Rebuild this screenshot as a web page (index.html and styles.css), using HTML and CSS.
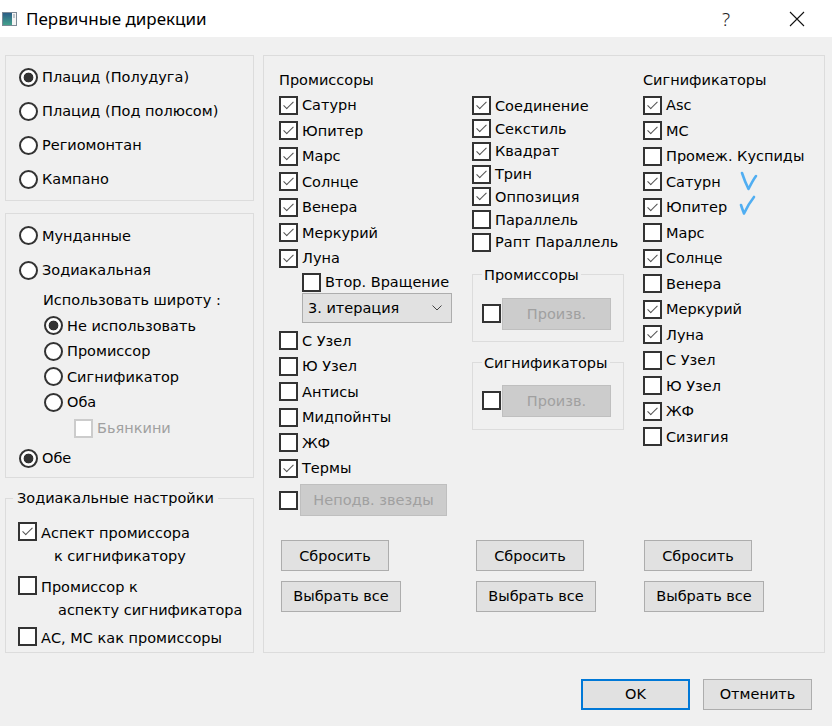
FILE: index.html
```html
<!DOCTYPE html>
<html lang="ru">
<head>
<meta charset="utf-8">
<title>Первичные дирекции</title>
<link rel="stylesheet" href="styles.css">
</head>
<body>
<header class="titlebar">
  <svg class="app-icon" viewBox="0 0 15 14" aria-hidden="true">
    <defs>
      <linearGradient id="ig" x1="0" y1="0" x2="0" y2="1">
        <stop offset="0" stop-color="#2b5d86"/>
        <stop offset="1" stop-color="#43a18c"/>
      </linearGradient>
    </defs>
    <rect x="0.5" y="0.5" width="14" height="13" fill="#f4f4f4" stroke="#7d8a96"/>
    <rect x="1" y="1" width="9" height="12" fill="url(#ig)"/>
    <rect x="11.5" y="2" width="1" height="4" fill="#8a96a0"/>
  </svg>
  <span class="title">Первичные дирекции</span>
  <span class="help">?</span>
  <svg class="close" viewBox="0 0 16 16" aria-hidden="true">
    <path d="M1 1 L15 15 M15 1 L1 15" stroke="#111" stroke-width="1.1" fill="none"/>
  </svg>
</header>

<main class="content">
  <div class="left">
    <section class="box box-method">
      <div class="opt h34"><span class="radio on"></span>Плацид (Полудуга)</div>
      <div class="opt h34"><span class="radio"></span>Плацид (Под полюсом)</div>
      <div class="opt h34"><span class="radio"></span>Региомонтан</div>
      <div class="opt h34"><span class="radio"></span>Кампано</div>
    </section>

    <section class="box box-type">
      <div class="opt h35"><span class="radio"></span>Мунданные</div>
      <div class="opt h34"><span class="radio"></span>Зодиакальная</div>
      <div class="opt h26 ind-label">Использовать широту :</div>
      <div class="opt h255 ind-radio"><span class="radio on"></span>Не использовать</div>
      <div class="opt h255 ind-radio"><span class="radio"></span>Промиссор</div>
      <div class="opt h255 ind-radio"><span class="radio"></span>Сигнификатор</div>
      <div class="opt h255 ind-radio"><span class="radio"></span>Оба</div>
      <div class="opt h26 ind-cb dim"><span class="cb dis"></span>Бьянкини</div>
      <div class="opt h34"><span class="radio on"></span>Обе</div>
    </section>

    <fieldset class="group group-zod">
      <legend>Зодиакальные настройки</legend>
      <div class="multi"><span class="cb on"></span><div class="lines"><div>Аспект промиссора</div><div class="l2a">к сигнификатору</div></div></div>
      <div class="multi m2"><span class="cb"></span><div class="lines"><div>Промиссор к</div><div class="l2b">аспекту сигнификатора</div></div></div>
      <div class="multi m3"><span class="cb"></span><div class="lines"><div>АС, МС как промиссоры</div></div></div>
    </fieldset>
  </div>

  <section class="panel">
    <div class="cols">
      <div class="col col1">
        <div class="head">Промиссоры</div>
        <div class="row"><span class="cb on"></span>Сатурн</div>
        <div class="row"><span class="cb on"></span>Юпитер</div>
        <div class="row"><span class="cb on"></span>Марс</div>
        <div class="row"><span class="cb on"></span>Солнце</div>
        <div class="row"><span class="cb on"></span>Венера</div>
        <div class="row"><span class="cb on"></span>Меркурий</div>
        <div class="row"><span class="cb on"></span>Луна</div>
        <div class="sub"><span class="cb"></span>Втор. Вращение</div>
        <div class="combo"><span>3. итерация</span>
          <svg class="chev" viewBox="0 0 10 6" aria-hidden="true"><path d="M0.5 0.5 L5 5 L9.5 0.5" fill="none" stroke="#444" stroke-width="1"/></svg>
        </div>
        <div class="row"><span class="cb"></span>С Узел</div>
        <div class="row"><span class="cb"></span>Ю Узел</div>
        <div class="row"><span class="cb"></span>Антисы</div>
        <div class="row"><span class="cb"></span>Мидпойнты</div>
        <div class="row"><span class="cb"></span>ЖФ</div>
        <div class="row"><span class="cb on"></span>Термы</div>
        <div class="fixed"><span class="cb"></span><button class="btn disabled wide">Неподв. звезды</button></div>
      </div>

      <div class="col col2">
        <div class="row2"><span class="cb on"></span>Соединение</div>
        <div class="row2"><span class="cb on"></span>Секстиль</div>
        <div class="row2"><span class="cb on"></span>Квадрат</div>
        <div class="row2"><span class="cb on"></span>Трин</div>
        <div class="row2"><span class="cb on"></span>Оппозиция</div>
        <div class="row2"><span class="cb"></span>Параллель</div>
        <div class="row2"><span class="cb"></span>Рапт Параллель</div>
        <fieldset class="group small g1">
          <legend>Промиссоры</legend>
          <div class="arb"><span class="cb"></span><button class="btn disabled arb-btn">Произв.</button></div>
        </fieldset>
        <fieldset class="group small g2">
          <legend>Сигнификаторы</legend>
          <div class="arb"><span class="cb"></span><button class="btn disabled arb-btn">Произв.</button></div>
        </fieldset>
      </div>

      <div class="col col3">
        <div class="head">Сигнификаторы</div>
        <div class="row"><span class="cb on"></span>Asc</div>
        <div class="row"><span class="cb on"></span>MC</div>
        <div class="row"><span class="cb"></span>Промеж. Куспиды</div>
        <div class="row"><span class="cb on"></span>Сатурн</div>
        <div class="row"><span class="cb on"></span>Юпитер</div>
        <div class="row"><span class="cb"></span>Марс</div>
        <div class="row"><span class="cb on"></span>Солнце</div>
        <div class="row"><span class="cb"></span>Венера</div>
        <div class="row"><span class="cb on"></span>Меркурий</div>
        <div class="row"><span class="cb on"></span>Луна</div>
        <div class="row"><span class="cb"></span>С Узел</div>
        <div class="row"><span class="cb"></span>Ю Узел</div>
        <div class="row"><span class="cb on"></span>ЖФ</div>
        <div class="row"><span class="cb"></span>Сизигия</div>
      </div>
    </div>

    <div class="actions">
      <div class="act"><button class="btn reset">Сбросить</button><button class="btn all">Выбрать все</button></div>
      <div class="act"><button class="btn reset">Сбросить</button><button class="btn all">Выбрать все</button></div>
      <div class="act"><button class="btn reset">Сбросить</button><button class="btn all">Выбрать все</button></div>
    </div>

    <svg class="marks" viewBox="733 165 30 55" aria-hidden="true">
      <path d="M742 173 C744 179 746 184 748.5 189 C751 184 753 180 756 176" fill="none" stroke="#3ea6f2" stroke-width="2.6" stroke-linecap="round" stroke-linejoin="round" opacity="0.9"/>
      <path d="M741 205 C742 208 743 211 744 213.5 C747 207 750 202 754 197" fill="none" stroke="#3ea6f2" stroke-width="2.6" stroke-linecap="round" stroke-linejoin="round" opacity="0.9"/>
    </svg>
  </section>
</main>

<footer class="footer">
  <button class="btn ok">OK</button>
  <button class="btn">Отменить</button>
</footer>
</body>
</html>
```

FILE: styles.css
```css
* { box-sizing: border-box; }

html, body { margin: 0; padding: 0; }

body {
  width: 832px;
  height: 726px;
  overflow: hidden;
  background: #f0f0f0;
  color: #000;
  font-family: "DejaVu Sans", "Liberation Sans", sans-serif;
  font-size: 14.5px;
}

/* ---------- title bar ---------- */
.titlebar {
  height: 37px;
  background: #fff;
  display: flex;
  align-items: center;
  padding-left: 2px;
}
.app-icon { width: 15px; height: 14px; margin-right: 9px; flex: none; }
.title {
  flex: 1;
  font-family: "Noto Sans", "Open Sans", sans-serif;
  font-size: 17px;
  color: #000;
}
.help {
  width: 10px;
  margin-right: 58px;
  text-align: center;
  font-family: "Noto Sans", sans-serif;
  font-weight: 300;
  font-size: 19px;
  color: #222;
}
.close { width: 16px; height: 16px; margin-right: 27px; flex: none; }

/* ---------- main area ---------- */
.content {
  display: flex;
  gap: 9px;
  padding: 18px 7px 0 5px;
}
.left {
  width: 249px;
  flex: none;
  display: flex;
  flex-direction: column;
}
.box { border: 1px solid #dcdcdc; }
.box-method { padding: 4px 0 4px 13px; }
.box-type { margin-top: 12px; padding: 4px 0 2px 13px; }

.opt { display: flex; align-items: center; white-space: nowrap; }
.h34 { height: 34px; }
.h35 { height: 35px; }
.h26 { height: 26px; }
.h255 { height: 25.5px; }
.ind-label { padding-left: 24px; }
.ind-radio { padding-left: 25px; }
.ind-cb { padding-left: 55px; }
.dim { color: #a0a0a0; }

.radio {
  width: 19px;
  height: 19px;
  flex: none;
  border: 2px solid #333;
  border-radius: 50%;
  background: #fff;
  margin-right: 4px;
}
.radio.on { background: radial-gradient(circle, #333 0 4.6px, #fff 5.2px); }

.cb {
  position: relative;
  width: 19px;
  height: 19px;
  flex: none;
  border: 2px solid #333;
  background: #fff;
  margin-right: 4px;
}
.cb.on::after {
  content: "";
  position: absolute;
  left: 5px;
  top: 1px;
  width: 4px;
  height: 9px;
  border: solid #555;
  border-width: 0 1.5px 1.5px 0;
  transform: rotate(45deg);
}
.cb.dis { border-color: #cccccc; }

/* ---------- group boxes ---------- */
.group {
  margin: 0;
  min-width: 0;
  border: 1px solid #dcdcdc;
}
.group legend {
  line-height: 18px;
  padding: 0 4px;
}
.group-zod {
  margin-top: 11px;
  padding: 15px 6px 2px 7px;
}
.multi {
  display: flex;
  align-items: flex-start;
  line-height: 22.5px;
  padding-left: 5px;
  white-space: nowrap;
}
.multi .cb { margin-top: 0; }
.m2 { margin-top: 9px; }
.m3 { margin-top: 6px; }
.l2a { padding-left: 13px; }
.l2b { padding-left: 17px; }

/* ---------- right panel ---------- */
.panel {
  position: relative;
  flex: 1;
  border: 1px solid #dcdcdc;
  padding: 11px 0 0 15px;
  display: flex;
  flex-direction: column;
}
.cols {
  display: grid;
  grid-template-columns: 193px 171px 1fr;
}
.col { display: flex; flex-direction: column; align-items: flex-start; }
.head, .row {
  height: 25.5px;
  display: flex;
  align-items: center;
  white-space: nowrap;
}
.sub {
  height: 22px;
  display: flex;
  align-items: center;
  padding-left: 23px;
  white-space: nowrap;
}
.combo {
  margin-left: 23px;
  width: 150px;
  height: 30px;
  margin-bottom: 5px;
  display: flex;
  align-items: center;
  justify-content: space-between;
  padding: 0 9px 0 5px;
  background: #e1e1e1;
  border: 1px solid #adadad;
}
.chev { width: 10px; height: 6px; }
.fixed {
  margin-top: 3px;
  height: 32px;
  display: flex;
  align-items: center;
}
.fixed .cb { margin-right: 2px; }

.col2 { padding-top: 27.5px; }
.row2 {
  height: 22.75px;
  display: flex;
  align-items: center;
  white-space: nowrap;
}
.small {
  width: 152px;
  padding: 14px 11px 11px 9px;
}
.small legend { padding: 0 2px; }
.g1 { margin-top: 12px; }
.g2 { margin-top: 12px; padding-top: 13px; padding-bottom: 12px; }
.arb { display: flex; align-items: center; }
.arb .cb { margin-right: 1px; }

/* ---------- buttons ---------- */
.btn {
  font: inherit;
  color: #000;
  height: 31px;
  padding: 0;
  background: #e1e1e1;
  border: 1px solid #adadad;
  border-radius: 0;
  white-space: nowrap;
}
.btn.disabled {
  background: #cccccc;
  border-color: #bfbfbf;
  color: #a0a0a0;
}
.wide { width: 147px; height: 32px; }
.arb-btn { width: 109px; height: 32px; }

.actions {
  margin-top: 24px;
  display: grid;
  grid-template-columns: 195px 168px 1fr;
  padding-left: 2px;
}
.act {
  display: flex;
  flex-direction: column;
  align-items: flex-start;
  gap: 9.5px;
}
.reset { width: 108px; }
.all { width: 120px; }

.marks {
  position: absolute;
  left: 469px;
  top: 109px;
  width: 30px;
  height: 55px;
}

.footer {
  display: flex;
  justify-content: flex-end;
  gap: 13px;
  padding: 26px 20px 0 0;
}
.footer .btn { width: 109px; }
.btn.ok { border: 2px solid #0078d7; }
```
